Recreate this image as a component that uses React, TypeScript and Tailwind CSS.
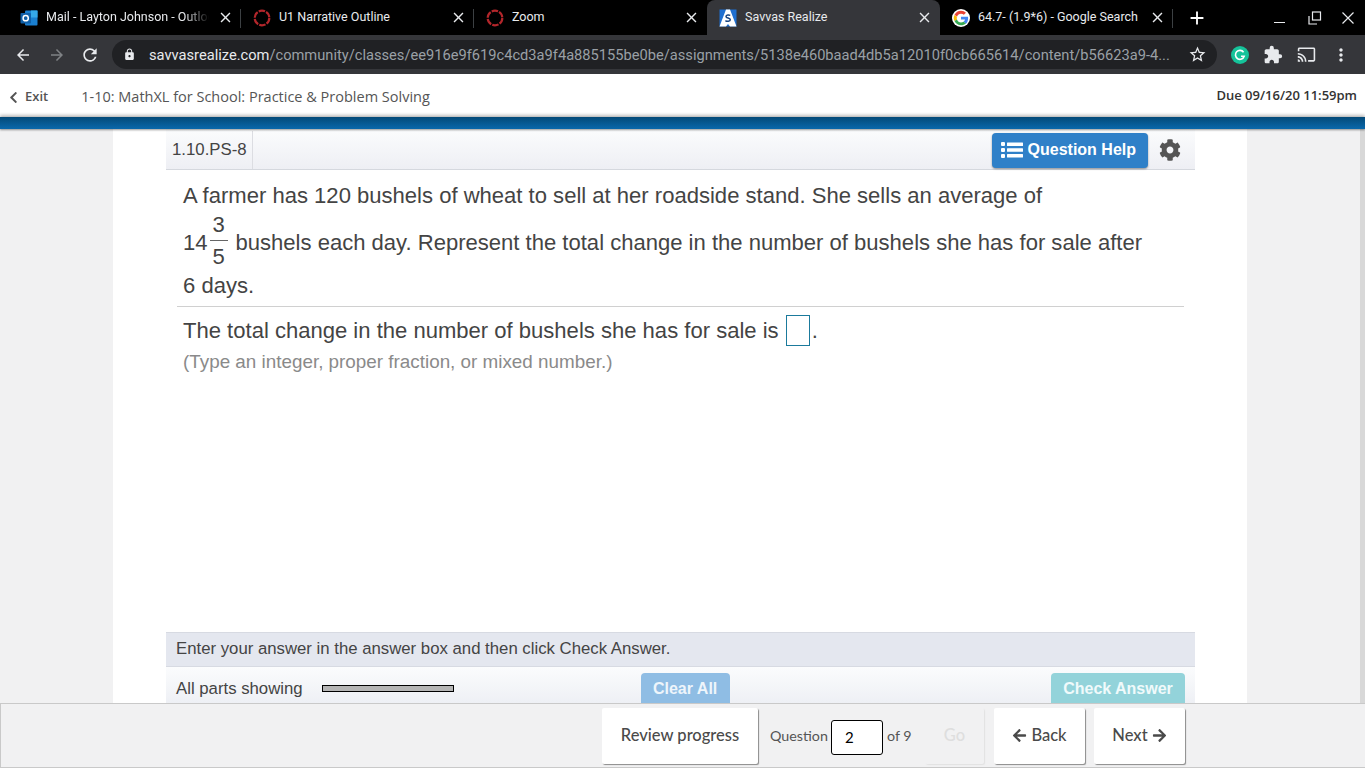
import type { ReactNode } from 'react';
import { FaArrowLeft, FaArrowRight, FaChevronLeft, FaCog } from 'react-icons/fa';
import { MdAdd, MdArrowBack, MdArrowForward, MdCast, MdClose, MdExtension, MdLock, MdMoreVert, MdRefresh, MdStarBorder } from 'react-icons/md';

const OutlookIcon = () => (
  <svg viewBox="0 0 18 18" className="h-[18px] w-[18px] shrink-0">
    <rect x="5" y="1.500" width="12.500" height="15" rx="1" fill="#1a7fd0" />
    <rect x="11" y="1.500" width="6.500" height="7" fill="#35a8e8" />
    <rect x="0.500" y="4" width="10.500" height="10.500" rx="1" fill="#0f5fa8" />
    <circle cx="5.700" cy="9.200" r="2.600" fill="none" stroke="#fff" strokeWidth="1.500" />
  </svg>
);

const ZoomIcon = () => (
  <svg viewBox="0 0 18 18" className="h-[18px] w-[18px] shrink-0">
    <circle cx="9" cy="9" r="7.300" fill="none" stroke="#b3262b" strokeWidth="2.200" strokeDasharray="6.500 1.200" />
  </svg>
);

const SavvasIcon = () => (
  <svg viewBox="0 0 18 18" className="h-[18px] w-[18px] shrink-0">
    <rect x="0.500" y="0.500" width="17" height="17" fill="#1f6fd0" />
    <path d="M7 0.500h4L17.500 17.500H11L9 15l-2 2.500H0.500z" fill="#fff" />
    <path d="M11.200 6.500c-.8-.8-4.200-1-4.200.9 0 2.100 4.300 1.200 4.300 3.300 0 2-3.500 1.900-4.900.9" fill="none" stroke="#17437f" strokeWidth="1.500" />
  </svg>
);

const GoogleIcon = () => (
  <svg viewBox="0 0 48 48" className="h-[18px] w-[18px] shrink-0">
    <circle cx="24" cy="24" r="24" fill="#fff" />
    <path fill="#EA4335" d="M24 12.500c3 0 5.600 1 7.600 3l5.700-5.700C33.800 6.500 29.300 4.500 24 4.500 16.400 4.500 9.800 8.900 6.600 15.200l6.700 5.200c1.600-4.700 5.900-7.900 10.700-7.900z" />
    <path fill="#4285F4" d="M43 24.500c0-1.400-.1-2.700-.4-4H24v7.600h10.700c-.5 2.500-1.900 4.600-4 6l6.500 5C41 35.600 43 30.500 43 24.500z" />
    <path fill="#FBBC05" d="M13.300 28.600c-.4-1.200-.6-2.400-.6-3.700s.2-2.500.6-3.700l-6.700-5.200C5.200 18.700 4.500 21.300 4.500 24s.7 5.300 2.100 8z" />
    <path fill="#34A853" d="M24 43.500c5.300 0 9.700-1.700 13.200-4.700l-6.500-5c-1.800 1.200-4 1.900-6.700 1.900-4.800 0-9.100-3.200-10.700-7.900L6.600 32c3.200 6.700 9.800 11.500 17.400 11.500z" />
  </svg>
);

const GrammarlyIcon = () => (
  <svg viewBox="0 0 18 18" className="ml-[14px] h-[18px] w-[18px] shrink-0">
    <circle cx="9" cy="9" r="9" fill="#15c39a" />
    <path d="M12.600 6.200A4.500 4.500 0 1 0 13.200 10.300H10" fill="none" stroke="#fff" strokeWidth="1.600" />
  </svg>
);

const ListIcon = () => (
  <svg viewBox="0 0 22 16" className="h-[16px] w-[22px]" fill="#fff">
    <rect x="0" y="0" width="4" height="4" rx="1" />
    <rect x="0" y="6" width="4" height="4" rx="1" />
    <rect x="0" y="12" width="4" height="4" rx="1" />
    <rect x="6" y="0.500" width="16" height="3.500" rx="0.500" />
    <rect x="6" y="6.250" width="16" height="3.500" rx="0.500" />
    <rect x="6" y="12" width="16" height="3.500" rx="0.500" />
  </svg>
);

type TabProps = { icon: ReactNode; title: string; active?: boolean; fade?: boolean; divider?: boolean };

const Tab = ({ icon, title, active, fade, divider }: TabProps) => (
  <div className={`relative flex h-[35px] w-[233px] shrink-0 items-center pl-3 pr-[7px] ${active ? 'rounded-t-lg bg-[#35363a]' : ''}`}>
    {icon}
    <span className={`ml-2 flex-1 overflow-hidden whitespace-nowrap text-[12.5px] text-[#e8eaed] ${fade ? '[mask-image:linear-gradient(to_right,black_85%,transparent)]' : ''}`}>{title}</span>
    <MdClose className="ml-2 text-[#e8eaed]" size={17} />
    {divider && <span className="absolute right-0 top-[9px] h-[19px] w-px bg-[#3c4043]" />}
  </div>
);

const FootButton = ({ children, width, disabled }: { children: ReactNode; width: string; disabled?: boolean }) => (
  <div className={`flex h-[56px] items-center justify-center rounded-[2px] text-[16.5px] font-medium ${width} ${disabled ? 'bg-[#f1f1f2] text-[#dedede] shadow-[1px_1px_1px_#e2e2e2]' : 'bg-white text-[#4a4a4a] shadow-[1px_1px_1px_#8a8a8a]'}`}>
    {children}
  </div>
);

export default function App() {
  return (
    <div className="flex h-[768px] w-[1365px] flex-col overflow-hidden bg-white font-['Liberation_Sans',sans-serif]">
      {/* browser chrome */}
      <div className="flex h-[35px] shrink-0 items-center bg-black pl-2 font-['Roboto',sans-serif]">
        <Tab icon={<OutlookIcon />} title="Mail - Layton Johnson - Outlook" fade divider />
        <Tab icon={<ZoomIcon />} title="U1 Narrative Outline" divider />
        <Tab icon={<ZoomIcon />} title="Zoom" />
        <Tab icon={<SavvasIcon />} title="Savvas Realize" active />
        <Tab icon={<GoogleIcon />} title="64.7- (1.9*6) - Google Search" divider />
        <MdAdd className="ml-[13px] text-white" size={22} />
        <div className="ml-auto flex items-center text-[#e8eaed]">
          <span className="mt-[10px] h-px w-[11px] bg-[#e8eaed]" />
          <svg viewBox="0 0 14 14" className="ml-[23px] h-[14px] w-[14px]" fill="none" stroke="#e8eaed" strokeWidth="1.200">
            <rect x="4.500" y="1" width="8" height="8" />
            <path d="M1 5v8h8" />
          </svg>
          <svg viewBox="0 0 12 12" className="ml-[20px] mr-[11px] h-[12px] w-[12px]" fill="none" stroke="#e8eaed" strokeWidth="1.200">
            <path d="M0.500 0.500l11 11M11.500 0.500l-11 11" />
          </svg>
        </div>
      </div>
      <div className="flex h-[39px] shrink-0 items-center bg-[#35363a] font-['Roboto',sans-serif]">
        <MdArrowBack className="ml-[14px] text-[#e8eaed]" size={18} />
        <MdArrowForward className="ml-[16px] text-[#7f8285]" size={18} />
        <MdRefresh className="ml-[14px] text-[#e8eaed]" size={20} />
        <div className="ml-[12px] flex h-[29px] w-[1105px] items-center rounded-full bg-[#202124] pl-[11px] pr-[10px]">
          <MdLock className="text-[#e8eaed]" size={13} />
          <span className="ml-[13px] flex-1 overflow-hidden whitespace-nowrap text-[14.67px] text-[#9aa0a6]">
            <span className="text-[#e8eaed]">savvasrealize.com</span>/community/classes/ee916e9f619c4cd3a9f4a885155be0be/assignments/5138e460baad4db5a12010f0cb665614/content/b56623a9-4...
          </span>
          <MdStarBorder className="ml-2 text-[#e8eaed]" size={19} />
        </div>
        <GrammarlyIcon />
        <MdExtension className="ml-[14px] text-[#e8eaed]" size={20} />
        <MdCast className="ml-[14px] text-[#e8eaed]" size={19} />
        <MdMoreVert className="ml-[15px] text-[#e8eaed]" size={20} />
      </div>

      {/* app header */}
      <div className="flex h-[43px] shrink-0 items-center bg-white pl-[7px] pr-2 pt-[3px] font-['Open_Sans',sans-serif] text-[#555]">
        <FaChevronLeft size={13} className="text-[#555]" />
        <span className="ml-[5px] text-[13px] font-semibold">Exit</span>
        <span className="ml-[33px] text-[14.5px]">1-10: MathXL for School: Practice &amp; Problem Solving</span>
        <span className="mb-[3px] ml-auto text-[13px] font-semibold text-[#333]">Due 09/16/20 11:59pm</span>
      </div>
      <div className="relative z-10 h-[12px] shrink-0 bg-[linear-gradient(#044a78,#0a68ab)] shadow-[0_-2px_3px_rgba(0,0,0,0.25),0_1px_2px_rgba(0,0,0,0.4)]" />

      {/* question */}
      <div className="flex min-h-0 flex-1 overflow-hidden bg-[#f1f1f2]">
        <div className="flex flex-1 justify-center">
          <div className="flex w-[1134px] flex-col bg-white pl-[53px] pr-[52px] text-[#444]">
            <div className="flex h-[41px] shrink-0 items-stretch border-b border-[#d5d8de] bg-[linear-gradient(#fbfcfd,#eeeff4)] pt-[2px]">
              <div className="flex w-[87px] items-center border-r border-[#dcdde2] pl-[6px] text-[16.8px]">1.10.PS-8</div>
              <div className="ml-auto flex items-center">
                <div className="flex h-[35px] items-center gap-[5px] rounded-[4px] bg-[#2f80c8] pl-[9px] pr-[12px] text-[16px] font-bold text-white shadow-[0_1px_2px_rgba(0,0,0,0.4)]">
                  <ListIcon />
                  Question Help
                </div>
                <FaCog size={22} className="ml-[11px] mr-[14px] text-[#555]" />
              </div>
            </div>
            <div className="flex-1 pl-[11px] pr-[11px] text-[22.05px]">
              <div className="pl-[6px]">
                <p className="mt-[12px] leading-[28px]">A farmer has 120 bushels of wheat to sell at her roadside stand. She sells an average of</p>
                <div className="mt-[4px] flex h-[58px] items-center whitespace-nowrap">
                  <span>14</span>
                  <span className="mx-[2px] mb-[4px] inline-flex w-[18px] flex-col items-center leading-none">
                    <span className="pb-[3px]">3</span>
                    <span className="h-px w-full bg-[#666]" />
                    <span className="pt-[5px]">5</span>
                  </span>
                  <span className="ml-[6px]">bushels each day. Represent the total change in the number of bushels she has for sale after</span>
                </div>
                <p className="leading-[28px]">6 days.</p>
              </div>
              <div className="mt-[6px] border-t border-[#d0d0d0] pl-[6px] pt-[7px]">
                <div className="flex items-center">
                  The total change in the number of bushels she has for sale is
                  <span className="ml-[7px] mr-[2px] h-[31px] w-[24px] border border-[#1b7a9c]" />.
                </div>
                <p className="mt-[1px] text-[18.85px] text-[#8a8a8a]">(Type an integer, proper fraction, or mixed number.)</p>
              </div>
            </div>
            <div className="flex h-[35px] shrink-0 items-center border-y border-[#d7dae2] bg-[#e4e7ef] pb-[2px] pl-[10px] text-[16.75px]">
              Enter your answer in the answer box and then click Check Answer.
            </div>
            <div className="flex h-[36px] shrink-0 items-center bg-[linear-gradient(#fbfcfd,#eef0f5)] pl-[10px] pr-[10px] pt-[7px] text-[16.75px]">
              All parts showing
              <span className="ml-[19px] h-[7px] w-[132px] border border-black bg-[#b5b5b5]" />
              <span className="ml-[187px] flex h-[30px] w-[89px] items-center justify-center self-end rounded-t-[4px] bg-[#8fbde4] pt-[2px] text-[16px] font-bold text-[#eef5fb]">Clear All</span>
              <span className="ml-auto flex h-[30px] w-[134px] items-center justify-center self-end rounded-t-[4px] bg-[#93d3da] pt-[2px] text-[16px] font-bold text-[#f0fafb]">Check Answer</span>
            </div>
          </div>
        </div>
        <div className="w-[5px] shrink-0 bg-[#d8d8d8]" />
      </div>

      {/* footer nav */}
      <div className="flex h-[65px] shrink-0 items-center border-y border-l border-[#c9c9c9] bg-[#f1f1f2] pl-[601px] font-['Lato',sans-serif]">
        <FootButton width="w-[156px]">Review progress</FootButton>
        <span className="ml-3 w-[58px] whitespace-nowrap text-[14.3px] text-[#555]">Question</span>
        <span className="ml-[3px] mt-[3px] flex h-[35px] w-[52px] items-center rounded-[3px] border border-black bg-white pl-[13px] text-[15px] text-black">2</span>
        <span className="ml-1 w-[24px] whitespace-nowrap text-[14.3px] text-[#555]">of 9</span>
        <div className="ml-[14px] mr-[10px]">
          <FootButton width="w-[59px]" disabled>Go</FootButton>
        </div>
        <FootButton width="w-[91px]">
          <FaArrowLeft size={15} className="mr-1" />Back
        </FootButton>
        <div className="ml-[9px]">
          <FootButton width="w-[91px]">
            Next<FaArrowRight size={15} className="ml-1" />
          </FootButton>
        </div>
      </div>
    </div>
  );
}
